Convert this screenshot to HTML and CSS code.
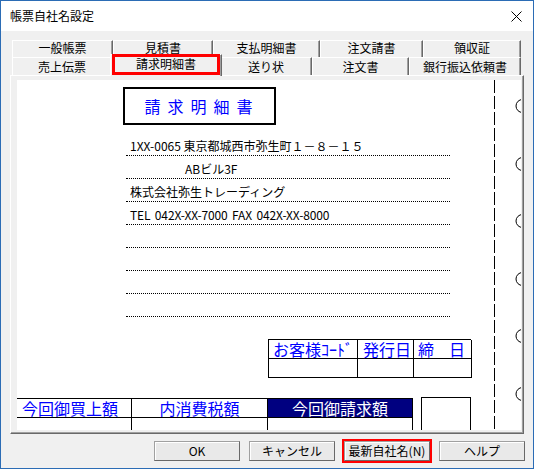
FILE: index.html
```html
<!DOCTYPE html>
<html lang="ja">
<head>
<meta charset="utf-8">
<title>帳票自社名設定</title>
<link rel="stylesheet" href="styles.css">
</head>
<body>
<div class="window">
  <div class="titlebar">
    <span class="title">帳票自社名設定</span>
    <svg class="close" width="11" height="11" viewBox="0 0 11 11"><path d="M0.5 0.5 L10.5 10.5 M10.5 0.5 L0.5 10.5" stroke="#000" stroke-width="1" fill="none"/></svg>
  </div>
  <div class="client">
    <div class="tabs">
      <div class="tabrow back">
        <div class="tab r1a">一般帳票</div>
        <div class="tab r1b">見積書</div>
        <div class="tab r1c">支払明細書</div>
        <div class="tab r1d">注文請書</div>
        <div class="tab r1e">領収証</div>
      </div>
      <div class="tabrow front">
        <div class="tab r2a">売上伝票</div>
        <div class="tab r2b selected">請求明細書</div>
        <div class="tab r2c">送り状</div>
        <div class="tab r2d">注文書</div>
        <div class="tab r2e">銀行振込依頼書</div>
      </div>
    </div>
    <div class="panel">
      <div class="sheet-view">
        <div class="sheet">
          <div class="doc-title">請求明細書</div>
          <div class="address">
            <div class="addr-row">1XX-0065 東京都城西市弥生町１－８－１５</div>
            <div class="addr-row indent">ABビル3F</div>
            <div class="addr-row">株式会社弥生トレーディング</div>
            <div class="addr-row spaced">TEL 042X-XX-7000 FAX 042X-XX-8000</div>
            <div class="addr-row"></div>
            <div class="addr-row"></div>
            <div class="addr-row"></div>
            <div class="addr-row"></div>
          </div>
          <div class="cust">
            <div class="cell head c-code">お客様ｺｰﾄﾞ</div>
            <div class="cell head c-date">発行日</div>
            <div class="cell head c-close"><span>締</span><span>日</span></div>
            <div class="cell c-code"></div>
            <div class="cell c-date"></div>
            <div class="cell c-close"></div>
          </div>
          <div class="totals">
            <div class="tot-table">
              <div class="tcell thead left">今回御買上額</div>
              <div class="tcell thead">内消費税額</div>
              <div class="tcell thead dark">今回御請求額</div>
              <div class="tcell"></div>
              <div class="tcell"></div>
              <div class="tcell"></div>
            </div>
            <div class="extra-box"></div>
          </div>
        </div>
        <div class="binding">
          <div class="perforation"></div>
          <div class="holes">
            <svg class="hole" width="9" height="14" viewBox="0 0 9 14"><path d="M7.5 0.5 A6.5 6.5 0 0 0 7.5 13.5" stroke="#000" fill="none"/></svg>
            <svg class="hole" width="9" height="14" viewBox="0 0 9 14"><path d="M7.5 0.5 A6.5 6.5 0 0 0 7.5 13.5" stroke="#000" fill="none"/></svg>
            <svg class="hole" width="9" height="14" viewBox="0 0 9 14"><path d="M7.5 0.5 A6.5 6.5 0 0 0 7.5 13.5" stroke="#000" fill="none"/></svg>
            <svg class="hole" width="9" height="14" viewBox="0 0 9 14"><path d="M7.5 0.5 A6.5 6.5 0 0 0 7.5 13.5" stroke="#000" fill="none"/></svg>
            <svg class="hole" width="9" height="14" viewBox="0 0 9 14"><path d="M7.5 0.5 A6.5 6.5 0 0 0 7.5 13.5" stroke="#000" fill="none"/></svg>
            <svg class="hole" width="9" height="14" viewBox="0 0 9 14"><path d="M7.5 0.5 A6.5 6.5 0 0 0 7.5 13.5" stroke="#000" fill="none"/></svg>
          </div>
        </div>
      </div>
    </div>
    <div class="buttons">
      <button class="btn">OK</button>
      <button class="btn">キャンセル</button>
      <button class="btn marked">最新自社名(N)</button>
      <button class="btn">ヘルプ</button>
    </div>
  </div>
</div>
</body>
</html>
```
FILE: styles.css
```css
* { box-sizing: border-box; }
html, body { margin: 0; padding: 0; }
body {
  width: 534px;
  height: 469px;
  overflow: hidden;
  font-family: "Noto Sans CJK JP", "Noto Sans", sans-serif;
  font-size: 12px;
  color: #000;
  background: #fff;
}
.window {
  width: 534px;
  height: 469px;
  border: 1px solid #2b6cb5;
  display: flex;
  flex-direction: column;
}
.titlebar {
  height: 30px;
  flex: none;
  background: #fff;
  display: flex;
  align-items: center;
  justify-content: space-between;
  padding: 0 11px 0 9px;
}
.title { font-size: 12px; line-height: 16px; }
.close { display: block; }
.client {
  flex: 1;
  background: #f0f0f0;
  padding: 9px 0 0 9px;
  display: flex;
  flex-direction: column;
}
.tabs { margin-left: 2px; width: 509px; }
.tabrow { display: flex; }
.tabrow.back { height: 17px; }
.tabrow.front { height: 18px; }
.tab {
  flex: none;
  text-align: center;
  font-size: 12px;
  background: #f0f0f0;
  border-top: 1px solid #fff;
  border-left: 1px solid #fff;
  border-right: 1px solid #696969;
  box-shadow: inset -1px 0 #a0a0a0;
  white-space: nowrap;
}
.back .tab { line-height: 14px; padding-top: 0; }
.front .tab { line-height: 16px; padding-top: 1px; }
.r1a { width: 101px; }
.r1b { width: 100px; }
.r1c { width: 107px; }
.r1d { width: 103px; }
.r1e { width: 98px; }
.r2a { width: 100px; }
.r2b { width: 112px; }
.r2c { width: 92px; }
.r2d { width: 97px; }
.r2e { width: 112px; }
.tab.selected {
  position: relative;
  z-index: 2;
  height: 22px;
  margin: -3px -2px -1px -2px;
  padding-top: 1px;
}
.tab.selected::after {
  content: "";
  position: absolute;
  left: 1px;
  right: 1px;
  top: -1px;
  bottom: 1px;
  border: 3px solid #ff0000;
}
.panel {
  width: 514px;
  height: 359px;
  flex: none;
  border-top: 1px solid #fff;
  border-left: 1px solid #fff;
  border-right: 1px solid #696969;
  border-bottom: 1px solid #696969;
  box-shadow: inset -1px -1px #a0a0a0;
  padding: 4px 2px 3px 6px;
}
.sheet-view {
  width: 504px;
  height: 350px;
  background: #fff;
  overflow: hidden;
  display: flex;
}
.sheet {
  width: 477px;
  flex: none;
  padding-top: 7px;
}
.doc-title {
  margin-left: 106px;
  width: 153px;
  height: 38px;
  border: 2px solid #000;
  display: flex;
  align-items: center;
  justify-content: center;
  color: #0000ff;
  font-size: 16px;
  letter-spacing: 7px;
  padding-left: 5px;
}
.address {
  margin-top: 8px;
  margin-left: 109px;
  width: 324px;
}
.addr-row {
  height: 23px;
  border-bottom: 1px dotted #000;
  padding: 4px 0 0 4px;
  line-height: 18px;
  font-size: 12px;
  white-space: nowrap;
}
.addr-row.indent { padding-left: 59px; }
.addr-row.spaced { word-spacing: 2px; letter-spacing: -0.15px; }
.cust {
  margin-top: 22px;
  margin-left: 251px;
  width: 203px;
  display: grid;
  grid-template-columns: 89px 56px 58px;
  grid-template-rows: 19px 19px;
  border-top: 1px solid #000;
  border-left: 1px solid #000;
}
.cell {
  border-right: 1px solid #000;
  border-bottom: 1px solid #000;
}
.cell.head {
  color: #0000ff;
  font-size: 16px;
  line-height: 18px;
  white-space: nowrap;
  padding-left: 4px;
}
.c-date.head { padding-left: 5px; }
.c-close.head {
  display: flex;
  justify-content: space-between;
  padding: 0 6px 0 4px;
}
.totals {
  margin-top: 20px;
  display: flex;
  align-items: flex-start;
}
.tot-table {
  width: 396px;
  flex: none;
  display: grid;
  grid-template-columns: 115px 136px 145px;
  grid-template-rows: 19px 20px;
  border-top: 1px solid #000;
}
.tcell {
  border-right: 1px solid #000;
  border-bottom: 1px solid #000;
}
.tcell.thead {
  color: #0000ff;
  font-size: 16px;
  line-height: 18px;
  text-align: center;
  white-space: nowrap;
}
.tcell.thead.left { text-align: left; padding-left: 5px; }
.tcell.thead.dark {
  background: #000080;
  color: #fff;
}
.extra-box {
  margin-left: 8px;
  width: 50px;
  height: 40px;
  margin-top: -1px;
  border: 1px solid #000;
  border-bottom: none;
  flex: none;
}
.binding {
  width: 27px;
  flex: none;
  display: flex;
}
.perforation {
  width: 1px;
  height: 350px;
  flex: none;
  background: repeating-linear-gradient(to bottom, #000 0 13px, transparent 13px 16px);
}
.holes {
  display: flex;
  flex-direction: column;
  padding-top: 19px;
  padding-left: 20px;
  gap: 43.5px;
}
.hole { display: block; flex: none; }
.buttons {
  margin-top: 7px;
  padding-left: 144px;
  display: flex;
  gap: 9px;
}
.btn {
  width: 86px;
  height: 20px;
  margin: 0;
  padding: 0;
  font-family: "Noto Sans CJK JP", "Noto Sans", sans-serif;
  font-size: 12px;
  line-height: 16px;
  color: #000;
  background: #e9e9e9;
  border: 1px solid #a0a0a0;
  border-right-color: #696969;
  border-bottom-color: #696969;
  box-shadow: inset 1px 1px #fff;
}
.btn.marked {
  outline: 2px solid #ff0000;
  outline-offset: 0;
}
```
